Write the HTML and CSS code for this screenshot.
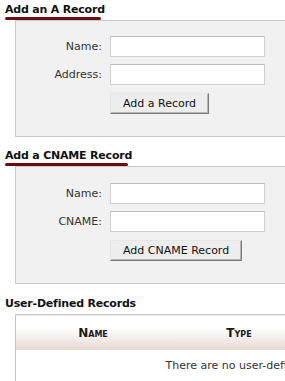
FILE: index.html
```html
<!DOCTYPE html>
<html>
<head>
<meta charset="utf-8">
<link rel="stylesheet" href="styles.css">
</head>
<body>
<div class="page">
  <section class="section">
    <h2 class="title underlined">Add an A Record</h2>
    <div class="box">
      <div class="form">
        <label class="label">Name:</label>
        <input class="field" type="text">
        <label class="label">Address:</label>
        <input class="field" type="text">
        <span></span>
        <div><button class="btn">Add a Record</button></div>
      </div>
    </div>
  </section>

  <section class="section second">
    <h2 class="title underlined">Add a CNAME Record</h2>
    <div class="box">
      <div class="form">
        <label class="label">Name:</label>
        <input class="field" type="text">
        <label class="label">CNAME:</label>
        <input class="field" type="text">
        <span></span>
        <div><button class="btn">Add CNAME Record</button></div>
      </div>
    </div>
  </section>

  <section class="section third">
    <h2 class="title">User-Defined Records</h2>
    <table class="records">
      <thead>
        <tr>
          <th class="c-name">Name</th>
          <th class="c-type">Type</th>
          <th class="c-rest">Record</th>
        </tr>
      </thead>
      <tbody>
        <tr><td colspan="3" class="empty">There are no user-defined records.</td></tr>
      </tbody>
    </table>
  </section>
</div>
</body>
</html>
```

FILE: styles.css
```css
html, body {
  margin: 0;
  padding: 0;
  background: #fff;
  overflow: hidden;
}
body {
  font-family: "DejaVu Sans", Verdana, sans-serif;
  font-size: 11px;
  color: #333;
}
.page {
  padding: 3px 0 0 5px;
  width: 560px;
}
.section.second { margin-top: 12px; }
.section.third { margin-top: 13px; }
.title {
  display: block;
  width: max-content;
  margin: 0;
  font-size: 11px;
  line-height: 14px;
  font-weight: bold;
  color: #111;
  letter-spacing: -0.2px;
}
.underlined::after {
  content: "";
  display: block;
  height: 3px;
  margin-right: 4px;
  border-radius: 2px;
  background: #6a0c12;
}
.box {
  margin-left: 10px;
  width: 400px;
  background: #f1f1f1;
  border: 1px solid #c9c9c9;
  padding: 15px 0 23px 0;
}
.second .box { padding-top: 16px; }
.form {
  display: grid;
  grid-template-columns: 86px 155px;
  grid-auto-rows: 21px;
  column-gap: 8px;
  row-gap: 7px;
  align-items: center;
}
.label {
  text-align: right;
  color: #333;
}
.field {
  box-sizing: border-box;
  width: 155px;
  height: 21px;
  margin: 0;
  border: 1px solid #cfcfcf;
  border-top-color: #bdbdbd;
  background: #fff;
}
.btn {
  box-sizing: border-box;
  height: 21px;
  margin: 1px 0 0 0;
  padding: 0 12px;
  font-family: "DejaVu Sans", Verdana, sans-serif;
  font-size: 11px;
  color: #111;
  background: #ededed;
  border: 1px solid;
  border-color: #e6e6e6 #7a7a7a #7a7a7a #e6e6e6;
  box-shadow: inset -1px -1px 0 #b5b5b5;
}
.records {
  margin-top: 3px;
  margin-left: 10px;
  width: 490px;
  border-collapse: collapse;
  border-top: 1px solid #c4c4c4;
  border-left: 1px solid #c4c4c4;
}
.records th {
  height: 35px;
  padding: 0;
  font-size: 12px;
  font-weight: bold;
  font-variant: small-caps;
  color: #1a1a1a;
  background: linear-gradient(to bottom, #ffffff 0%, #ffffff 35%, #e5d8d1 100%);
  text-align: center;
}
.c-name { width: 154px; }
.c-type { width: 138px; }
.empty {
  text-align: center;
  padding: 9px 0;
  color: #333;
}
```
